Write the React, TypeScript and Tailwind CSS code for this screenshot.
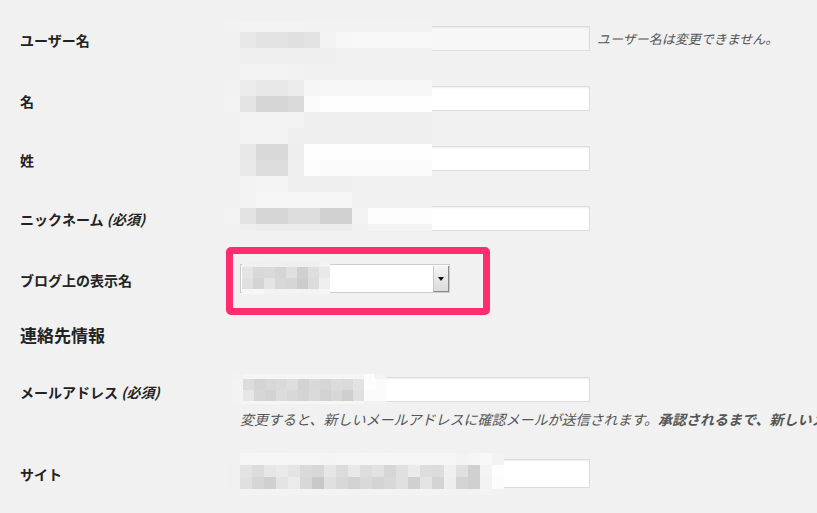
import React from "react";

type MosaicRow = [number, string];

function Mosaic({ pos, cell, rows }: { pos: string; cell: string; rows: MosaicRow[] }) {
  return (
    <div className={`absolute flex flex-col ${pos}`}>
      {rows.map(([h, cols], i) => (
        <div key={i} className="flex" style={{ height: h }}>
          {cols.split(" ").map((c, j) => (
            <div key={j} className={`${cell} h-full`} style={{ backgroundColor: `#${c}${c}${c}` }} />
          ))}
        </div>
      ))}
    </div>
  );
}

const bigRows: MosaicRow[] = [
  [10, "f2 f3 f3 f3 f3 f2 f2 f2 f2 f2 f2 f2 f2"],
  [16, "f1 e8 e3 e3 e0 e3 f3 f7 f8 f8 f8 f8 f8"],
  [16, "f1 ef ef ef ef ef ef f0 f0 f0 f0 f0 f0"],
  [16, "f1 f3 f3 f3 f2 f0 f0 f0 f0 f0 f0 f0 f0"],
  [16, "f2 ec e8 e8 eb f6 f7 f7 f7 f7 f7 f7 f7"],
  [16, "f3 e4 d6 d6 da fa fe fe fe fe fe fe fe"],
  [16, "f1 f3 f3 f3 f3 ef ef ef ef ef ef ef ef"],
  [16, "f1 f3 f3 f3 ef ef ef ef ef ef ef ef ef"],
  [16, "f1 e8 d9 d9 ee fe fe fe fe fe fe fe fe"],
  [16, "f1 e9 dc dc ef fd fa fa fa fa fa fa fa"],
  [16, "f1 f3 f4 f4 ef ef ef ef f1 f1 f1 f1 f1"],
  [16, "f1 f3 f5 f5 f5 f5 f5 f5 f1 f1 f1 f1 f1"],
  [16, "f3 e3 d6 d6 dc dc d1 d1 f3 fd fd fd fd"],
  [7, "f1 ef ec ec ec ec ec ec f1 f4 f4 f4 f4"],
];

const selectRows: MosaicRow[] = [
  [5, "f0 ef f0 f0 ee ef ef f3"],
  [11, "e4 d9 da d5 e0 d0 de e9"],
  [11, "e0 d4 e4 d8 d6 cc dc ef"],
  [5, "f5 f7 f3 f3 f3 f3 f3 f5"],
];

const emailRows: MosaicRow[] = [
  [5, "f2 f5 f5 f5 f5 f5 f5 f5 f5 f5 f5 f5 fc f3"],
  [11, "f3 dc d4 d7 da de d3 d9 d5 dc da e2 fd fb"],
  [11, "f3 e6 d6 d3 dc d8 d4 da d2 d7 cf e0 fa fb"],
  [3, "f2 f5 f6 f6 f6 f6 f6 f6 f6 f6 f6 f6 f2 f2"],
];

const siteRows: MosaicRow[] = [
  [12, "f1 f5 f6 f6 f6 f5 f5 f5 f4 f5 f5 f6 f5 f6 f5 f5 f5 f5 f5 f3 f5 f8 f3"],
  [12, "f0 e3 dc e6 ea e4 da d7 e6 dc e8 de e2 d6 e0 eb dd dc f0 e0 d0 f4 fd"],
  [12, "f0 e0 d6 d0 e4 eb d8 c8 e0 d8 d2 d9 d4 d8 e0 d0 e4 d4 ee d4 d0 f3 fc"],
  [6, "f1 f3 f3 f3 f3 f3 f3 f3 f3 f3 f3 f3 f3 f3 f3 f3 f3 f3 f3 f2 f3 f4 f2"],
];

const inputCls =
  "box-border block w-[350px] border border-[#dddddd] shadow-[inset_0_1px_2px_rgba(0,0,0,0.07)] outline-none";

function Label({ children, pt }: { children: React.ReactNode; pt: string }) {
  return <div className={`w-[220px] shrink-0 text-[14px] leading-[20px] font-bold ${pt}`}>{children}</div>;
}

export default function App() {
  return (
    <div className="relative w-[817px] h-[513px] overflow-hidden bg-[#f1f1f1] text-[#222222] font-['Noto_Sans_CJK_JP','Noto_Sans',sans-serif]">
      <div className="flex flex-col pl-[20px]">
        {/* username */}
        <div className="flex h-[60px]">
          <Label pt="pt-[30px]">ユーザー名</Label>
          <div className="pt-[26px] flex items-start gap-[7px]">
            <input readOnly className={`${inputCls} h-[25px] bg-[#f7f7f7]`} />
            <span className="text-[13px] leading-[25px] italic text-[#555555] whitespace-nowrap">
              ユーザー名は変更できません。
            </span>
          </div>
        </div>
        {/* first name */}
        <div className="flex h-[60px]">
          <Label pt="pt-[31px]">名</Label>
          <div className="pt-[26px]">
            <input readOnly className={`${inputCls} h-[25px] bg-white`} />
          </div>
        </div>
        {/* last name */}
        <div className="flex h-[60px]">
          <Label pt="pt-[30px]">姓</Label>
          <div className="pt-[26px]">
            <input readOnly className={`${inputCls} h-[25px] bg-white`} />
          </div>
        </div>
        {/* nickname */}
        <div className="flex h-[60px]">
          <Label pt="pt-[29px]">
            ニックネーム <span className="italic">(必須)</span>
          </Label>
          <div className="pt-[26px]">
            <input readOnly className={`${inputCls} h-[25px] bg-white`} />
          </div>
        </div>
        {/* display name */}
        <div className="flex h-[70px]">
          <Label pt="pt-[30px]">ブログ上の表示名</Label>
          <div className="pt-[24px]">
            <div className="relative box-border w-[210px] h-[29px] border border-[#cccccc] bg-white">
              <div className="absolute right-0 top-[1px] bottom-0 w-[16px] box-border border-l border-[#c8c8c8] border-r border-b border-r-[#8a8a8a] border-b-[#8a8a8a] bg-gradient-to-b from-[#f4f4f4] to-[#dcdcdc] flex items-center justify-center">
                <div className="w-0 h-0 border-l-[3px] border-r-[3px] border-t-[4px] border-l-transparent border-r-transparent border-t-[#111111]" />
              </div>
            </div>
          </div>
        </div>
        {/* heading */}
        <div className="h-[50px] pt-[13px]">
          <h2 className="text-[17px] leading-[24px] font-bold">連絡先情報</h2>
        </div>
        {/* email */}
        <div className="flex h-[80px]">
          <Label pt="pt-[22px]">
            メールアドレス <span className="italic">(必須)</span>
          </Label>
          <div className="pt-[17px]">
            <input readOnly className={`${inputCls} h-[25px] bg-white`} />
            <p className="mt-[8px] text-[14px] leading-[18px] italic text-[#555555] whitespace-nowrap">
              変更すると、新しいメールアドレスに確認メールが送信されます。
              <strong>承認されるまで、新しいメールアドレスは有効になりません。</strong>
            </p>
          </div>
        </div>
        {/* site */}
        <div className="flex h-[73px]">
          <Label pt="pt-[24px]">サイト</Label>
          <div className="pt-[19px]">
            <input readOnly className={`${inputCls} h-[29px] bg-white`} />
          </div>
        </div>
      </div>

      <Mosaic pos="left-[224px] top-[22px]" cell="w-[16px]" rows={bigRows} />
      <Mosaic pos="left-[242px] top-[262px]" cell="w-[11px]" rows={selectRows} />
      <Mosaic pos="left-[232px] top-[374px]" cell="w-[11px]" rows={emailRows} />
      <Mosaic pos="left-[228px] top-[453px]" cell="w-[12px]" rows={siteRows} />

      <div className="absolute left-[226px] top-[247px] w-[264px] h-[68px] box-border border-[7px] border-[#ff2d6e] rounded-[5px]" />
    </div>
  );
}
